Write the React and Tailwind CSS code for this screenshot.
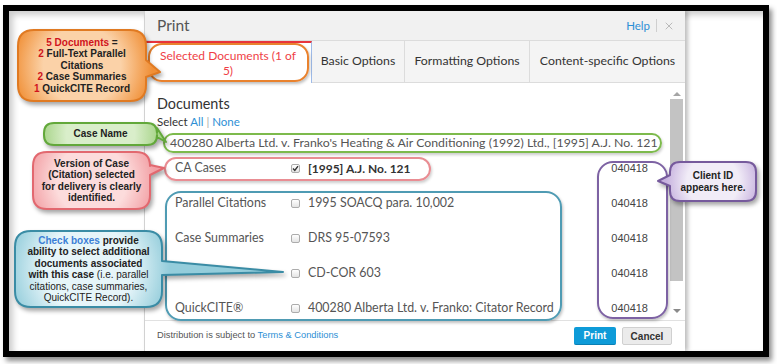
import { X } from "lucide-react";

const rows = [
  { label: "CA Cases", text: "[1995] A.J. No. 121", checked: true },
  { label: "Parallel Citations", text: "1995 SOACQ para. 10,002" },
  { label: "Case Summaries", text: "DRS 95-07593" },
  { label: "", text: "CD-COR 603" },
  { label: "QuickCITE®", text: "400280 Alberta Ltd. v. Franko: Citator Record" },
];

function Check({ checked }) {
  return (
    <span className="flex h-[9px] w-[9px] shrink-0 items-center justify-center rounded-[2px] border border-[#acacac] bg-linear-to-b from-white to-[#e4e4e4]">
      {checked && (
        <svg width="7" height="7" viewBox="0 0 7 7">
          <path d="M1 3.6 L2.8 5.4 L6 1.2" fill="none" stroke="#333" strokeWidth="1.4" />
        </svg>
      )}
    </span>
  );
}

// speech bubble used for the annotations laid over the screenshot
function Callout({ id, className, w, h, r, side = "right", p1, p2, tx, ty, c1, c2, stroke, children }) {
  const d =
    side === "right"
      ? `M${r} 0H${w - r}Q${w} 0 ${w} ${r}V${p1}L${tx} ${ty}L${w} ${p2}V${h - r}Q${w} ${h} ${w - r} ${h}H${r}Q0 ${h} 0 ${h - r}V${r}Q0 0 ${r} 0Z`
      : `M${r} 0H${w - r}Q${w} 0 ${w} ${r}V${h - r}Q${w} ${h} ${w - r} ${h}H${r}Q0 ${h} 0 ${h - r}V${p2}L${tx} ${ty}L0 ${p1}V${r}Q0 0 ${r} 0Z`;
  return (
    <div className={"absolute " + className}>
      <svg
        className="absolute left-0 top-0 overflow-visible drop-shadow-[2px_3px_2px_rgba(0,0,0,0.35)]"
        width={w}
        height={h}
      >
        <defs>
          <radialGradient id={id} gradientUnits="userSpaceOnUse" cx={w / 2} cy={h / 2} r={Math.max(w, h) * 0.55}>
            <stop offset="0" stopColor={c1} />
            <stop offset="0.55" stopColor={c1} />
            <stop offset="1" stopColor={c2} />
          </radialGradient>
        </defs>
        <path d={d} fill={`url(#${id})`} stroke={stroke} strokeWidth="2" strokeLinejoin="round" />
      </svg>
      <div className="relative flex h-full w-full flex-col items-center justify-center text-center font-['Liberation_Sans',Arial,sans-serif] text-[10px] font-bold leading-[11.5px] text-[#222]">
        {children}
      </div>
    </div>
  );
}

export default function App() {
  return (
    <div className="relative h-[364px] w-[777px] overflow-hidden bg-white font-['Lato',sans-serif]">
      <div className="ml-[3px] mt-[5px] h-[352px] w-[766px] border-[6px] border-black bg-white shadow-[3px_4px_5px_rgba(0,0,0,0.45)]">
        <div className="flex h-full shadow-[inset_4px_4px_6px_rgba(0,0,0,0.2)]">
          <div className="w-[135px]" />

          <div className="flex w-[541px] flex-col border-l border-[#d2d2d2] bg-white shadow-[3px_0_4px_rgba(0,0,0,0.25)]">
            <div className="flex h-[29px] items-center justify-between bg-[#f1f1f1] pl-[12px] pr-[10px]">
              <span className="text-[15.5px] text-[#555]">Print</span>
              <div className="flex items-center gap-[6px] text-[11.5px]">
                <span className="text-[#2d8fd5]">Help</span>
                <span className="h-[13px] w-px bg-[#cfcfcf]" />
                <X size={12} strokeWidth={1.3} color="#9a9a9a" />
              </div>
            </div>

            <div className="flex h-[43px] border-y border-[#dcdcdc] bg-[#f4f4f4] text-[12.3px] text-[#333]">
              <div className="-mb-px flex w-[167px] flex-col items-center justify-center border-r border-t-2 border-r-[#9fbbe8] border-t-[#e8343c] bg-white text-[12px] leading-[15px] text-[#ef3e46]">
                <span className="whitespace-nowrap">Selected Documents (1 of</span>
                <span>5)</span>
              </div>
              <div className="flex w-[93px] items-center justify-center border-r border-[#dcdcdc]">Basic Options</div>
              <div className="flex w-[125px] items-center justify-center border-r border-[#dcdcdc]">Formatting Options</div>
              <div className="flex flex-1 items-center justify-center">Content-specific Options</div>
            </div>

            <div className="flex h-[237px]">
              <div className="flex-1 overflow-hidden pl-[12px] pt-[11px] text-[#555]">
                <div className="h-[20px] text-[14.4px] leading-[20px] text-[#333]">Documents</div>
                <div className="h-[15px] text-[11.5px] leading-[15px] text-[#333]">
                  Select <span className="text-[#2d8fd5]">All</span> <span className="text-[#aaa]">|</span>{" "}
                  <span className="text-[#2d8fd5]">None</span>
                </div>
                <div className="ml-[13px] mt-[6px] h-[16px] whitespace-nowrap text-[12.3px] leading-[16px]">
                  400280 Alberta Ltd. v. Franko's Heating &amp; Air Conditioning (1992) Ltd., [1995] A.J. No. 121
                </div>
                {rows.map((row) => (
                  <div key={row.text} className="ml-[18px] flex h-[35px] items-center pr-[22px] text-[12.4px]">
                    <span className="w-[116px] shrink-0">{row.label}</span>
                    <Check checked={row.checked} />
                    <span
                      className={
                        row.checked
                          ? "ml-[8px] flex-1 whitespace-nowrap text-[12px] font-bold text-[#333]"
                          : "ml-[8px] flex-1 whitespace-nowrap"
                      }
                    >
                      {row.text}
                    </span>
                    <span className="font-['Liberation_Sans',Arial,sans-serif] text-[11px] text-[#444]">040418</span>
                  </div>
                ))}
              </div>

              <div className="mb-[4px] mr-[2px] mt-[5px] flex w-[13px] flex-col">
                <div className="flex h-[11px] items-center justify-center">
                  <span className="border-x-[4px] border-b-[4px] border-x-transparent border-b-[#a5a5a5]" />
                </div>
                <div className="h-[182px] bg-[#c3c3c3]" />
                <div className="flex-1" />
                <div className="flex h-[11px] items-center justify-center">
                  <span className="border-x-[4px] border-t-[4px] border-x-transparent border-t-[#8a8a8a]" />
                </div>
              </div>
            </div>

            <div className="flex h-[31px] items-center justify-between border-t border-[#e1e1e1] pl-[12px] pr-[13px] font-['Liberation_Sans',Arial,sans-serif]">
              <span className="text-[9.3px] text-[#555]">
                Distribution is subject to <span className="text-[#2d8fd5]">Terms &amp; Conditions</span>
              </span>
              <div className="flex gap-[6px] text-[10px] font-bold">
                <span className="flex h-[18px] w-[42px] items-center justify-center rounded-[2px] border-b border-[#0a7fb3] bg-[#0e9bd8] text-white">
                  Print
                </span>
                <span className="flex h-[18px] w-[50px] items-center justify-center rounded-[2px] border border-[#d0d0d0] bg-[#ebebeb] text-[#333]">
                  Cancel
                </span>
              </div>
            </div>
          </div>

          <div className="flex-1" />
        </div>
      </div>

      {/* highlight outlines */}
      <div className="absolute left-[148px] top-[43px] h-[39px] w-[161px] rounded-[14px] border-2 border-[#e9822e] shadow-[1px_2px_3px_rgba(0,0,0,0.25)]" />
      <div className="absolute left-[163px] top-[133px] h-[20px] w-[499px] rounded-full border-2 border-[#7dba4c] shadow-[1px_2px_3px_rgba(0,0,0,0.2)]" />
      <div className="absolute left-[164px] top-[157px] h-[24px] w-[267px] rounded-full border-2 border-[#e98d93] shadow-[1px_2px_3px_rgba(0,0,0,0.2)]" />
      <div className="absolute left-[165px] top-[191px] h-[130px] w-[397px] rounded-[16px] border-2 border-[#4f9bb3] shadow-[1px_2px_3px_rgba(0,0,0,0.25)]" />
      <div className="absolute left-[597px] top-[161px] h-[158px] w-[71px] rounded-[16px] border-2 border-[#7d62a3] shadow-[1px_2px_3px_rgba(0,0,0,0.25)]" />

      <Callout
        id="g-orange"
        className="left-[18px] top-[30px] h-[71px] w-[128px]"
        w={128}
        h={71}
        r={16}
        p1={30}
        p2={47}
        tx={142}
        ty={42}
        c1="#fbd2a8"
        c2="#f08f36"
        stroke="#e07a22"
      >
        <span>
          <span className="text-[#d0141c]">5 Documents</span> =
        </span>
        <span>
          <span className="text-[#d0141c]">2</span> Full-Text Parallel
        </span>
        <span>Citations</span>
        <span>
          <span className="text-[#d0141c]">2</span> Case Summaries
        </span>
        <span>
          <span className="text-[#d0141c]">1</span> QuickCITE Record
        </span>
      </Callout>

      <Callout
        id="g-green"
        className="left-[44px] top-[123px] h-[22px] w-[113px]"
        w={113}
        h={22}
        r={10}
        p1={5}
        p2={14}
        tx={122}
        ty={19}
        c1="#d9eeca"
        c2="#9fd07e"
        stroke="#62a83a"
      >
        <span>Case Name</span>
      </Callout>

      <Callout
        id="g-pink"
        className="left-[33px] top-[152px] h-[57px] w-[117px]"
        w={117}
        h={57}
        r={14}
        p1={13}
        p2={23}
        tx={131}
        ty={16}
        c1="#fcdcdc"
        c2="#f29ea3"
        stroke="#e2686f"
      >
        <span>Version of Case</span>
        <span>(Citation) selected</span>
        <span>for delivery is clearly</span>
        <span>identified.</span>
      </Callout>

      <Callout
        id="g-teal"
        className="left-[15px] top-[231px] h-[76px] w-[147px]"
        w={147}
        h={76}
        r={16}
        p1={30}
        p2={44}
        tx={268}
        ty={41}
        c1="#e6f5f9"
        c2="#94cddb"
        stroke="#3a8ca5"
      >
        <span>
          <span className="text-[#3b7fd6]">Check boxes</span> provide
        </span>
        <span>ability to select additional</span>
        <span>documents associated</span>
        <span>
          with this case <span className="font-normal">(i.e. parallel</span>
        </span>
        <span className="font-normal">citations, case summaries,</span>
        <span className="font-normal">QuickCITE Record).</span>
      </Callout>

      <Callout
        id="g-purple"
        className="left-[670px] top-[162px] h-[39px] w-[86px]"
        w={86}
        h={39}
        r={10}
        side="left"
        p1={13}
        p2={24}
        tx={-12}
        ty={19}
        c1="#f1ecf7"
        c2="#c6b1de"
        stroke="#765a9c"
      >
        <span>Client ID</span>
        <span>appears here.</span>
      </Callout>
    </div>
  );
}
